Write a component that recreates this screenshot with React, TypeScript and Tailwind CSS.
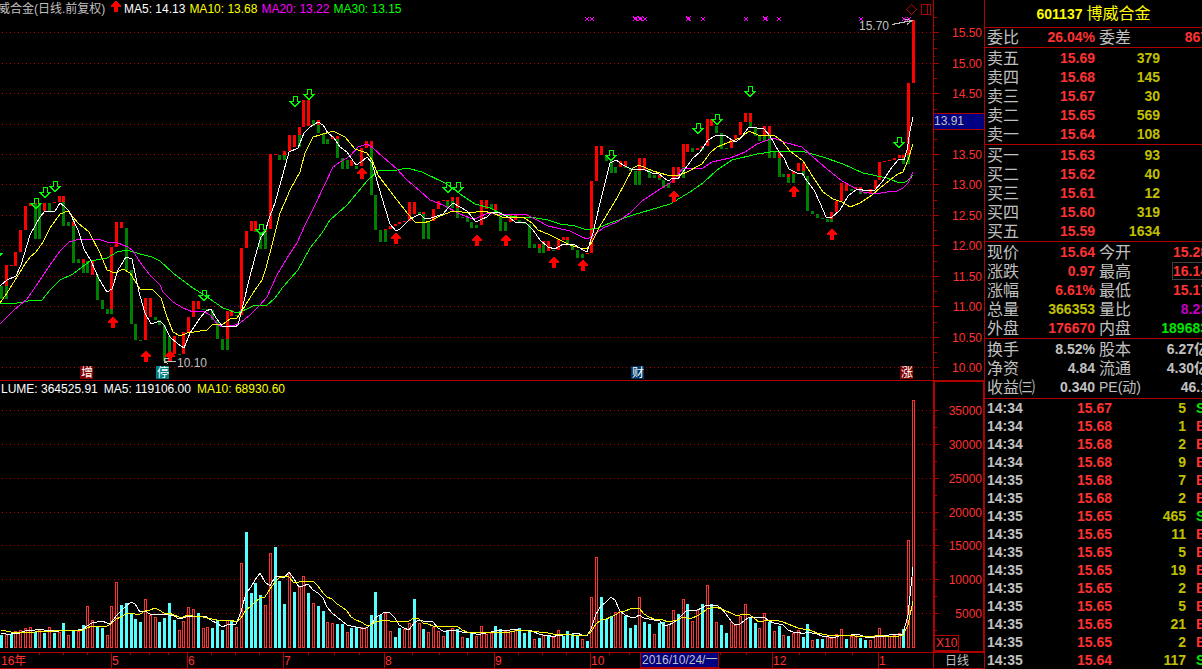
import React from "react";

const STEP = 4.8;
const VOLUME_BASE = 648;

// One entry per trading day: top, split, bottom. Red runs top to split, green runs split to bottom.
const PRICE_BARS: [number, number, number][] = [
  [286, 286, 299], [265, 286, 299], [265, 266, 266], [252, 266, 266], [230, 252, 252], [206, 230, 230],
  [203, 206, 206], [203, 204, 239], [203, 203, 239], [203, 211, 211], [203, 203, 211], [202, 203, 203],
  [196, 202, 202], [196, 202, 226], [222, 222, 226], [222, 226, 263], [259, 259, 263], [259, 263, 273],
  [261, 261, 273], [261, 275, 275], [275, 275, 300], [300, 300, 309], [309, 309, 314], [247, 309, 314],
  [222, 247, 247], [222, 228, 228], [228, 228, 270], [270, 270, 324], [324, 324, 340], [340, 340, 341],
  [298, 340, 340], [298, 317, 317], [317, 317, 320], [320, 320, 325], [325, 325, 361], [336, 336, 361],
  [336, 354, 354], [354, 354, 355], [332, 354, 354], [317, 332, 332], [301, 317, 317], [301, 309, 309],
  [309, 309, 310], [309, 309, 310], [310, 310, 320], [320, 320, 339], [339, 339, 350], [311, 339, 350],
  [310, 316, 316], [315, 315, 316], [248, 315, 315], [231, 248, 248], [221, 231, 231], [221, 231, 232],
  [232, 232, 249], [230, 232, 249], [154, 229, 229], [154, 155, 155], [155, 155, 160], [151, 155, 160],
  [135, 151, 151], [135, 147, 147], [127, 135, 147], [100, 127, 127], [100, 126, 126], [120, 120, 126],
  [120, 125, 133], [133, 133, 144], [139, 139, 144], [136, 139, 139], [136, 139, 158], [158, 158, 169],
  [160, 160, 169], [160, 166, 166], [166, 166, 169], [148, 166, 166], [141, 148, 148], [141, 148, 195],
  [195, 195, 230], [230, 230, 242], [229, 230, 242], [226, 229, 229], [224, 226, 226], [222, 224, 224],
  [221, 222, 222], [202, 221, 221], [202, 214, 214], [212, 212, 214], [212, 214, 239], [221, 221, 239],
  [209, 221, 221], [201, 209, 209], [200, 201, 201], [200, 201, 208], [197, 201, 208], [197, 208, 218],
  [217, 217, 218], [217, 217, 222], [222, 222, 228], [225, 225, 228], [200, 225, 225], [200, 209, 209],
  [204, 204, 209], [204, 210, 215], [212, 212, 231], [222, 222, 231], [215, 222, 222], [215, 220, 220],
  [220, 220, 222], [222, 222, 224], [224, 224, 248], [244, 244, 248], [244, 248, 253], [241, 244, 253],
  [241, 251, 251], [250, 250, 251], [239, 250, 250], [237, 240, 240], [237, 240, 245], [245, 245, 250],
  [250, 250, 258], [254, 254, 258], [253, 254, 254], [181, 253, 253], [146, 181, 181], [146, 155, 155],
  [155, 155, 161], [161, 161, 173], [167, 167, 173], [161, 167, 167], [161, 167, 168], [168, 168, 171],
  [171, 171, 185], [158, 171, 185], [158, 170, 170], [170, 170, 178], [175, 175, 178], [175, 178, 180],
  [180, 180, 188], [183, 183, 188], [167, 183, 183], [167, 177, 177], [144, 167, 178], [144, 152, 152],
  [148, 148, 152], [148, 150, 150], [146, 148, 150], [119, 146, 146], [119, 126, 126], [126, 126, 133],
  [133, 133, 149], [148, 148, 149], [139, 148, 148], [135, 139, 139], [122, 135, 135], [113, 122, 122],
  [113, 122, 128], [128, 128, 136], [136, 136, 141], [126, 136, 141], [126, 135, 158], [152, 152, 158],
  [152, 158, 177], [174, 174, 177], [174, 177, 183], [171, 174, 183], [163, 171, 171], [163, 171, 176],
  [176, 176, 211], [211, 211, 214], [214, 214, 218], [218, 218, 219], [219, 219, 222], [212, 219, 222],
  [201, 212, 212], [183, 201, 201], [183, 191, 191], [189, 189, 191], [187, 189, 189], [187, 189, 194],
  [193, 193, 194], [189, 193, 193], [180, 189, 189], [162, 180, 180], [161, 162, 162], [160, 161, 161],
  [158, 160, 160], [155, 158, 158], [155, 158, 164], [83, 155, 164], [20, 83, 83],
];

// Positive = up day (hollow red), negative = down day (solid cyan)
const VOLUMES = [
  -13, 14, -14, 17, 18, 20, 21, -16, 18, -15, 21, -15, 16, -25, 13, -17, 17, -23, 42, 28,
  -21, -20, 13, 42, 66, -43, -45, -35, -29, -26, 49, 33, 31, -26, -30, -45, -28, 18, 27, 41,
  39, -35, 20, 21, -20, -28, -18, 28, -27, 21, 85, -116, -55, -65, -53, 43, 95, -101, -67, -44,
  75, -56, 61, 72, -55, 45, -42, -37, 26, 25, -24, -24, 16, -20, -21, 21, 21, -33, -56, -33,
  35, 17, -11, -20, 19, 25, -49, 25, -19, 16, 21, 17, 12, -18, 20, -19, 11, -10, -16, 12,
  22, 14, 15, -22, -19, 17, 17, 18, -20, -15, -18, 9, -10, 13, -13, 11, 18, -12, -17, -14,
  -13, 9, -7, 51, 91, -51, -29, -32, 36, 37, -32, -20, -23, 51, -26, -24, 14, -25, -26, 24,
  38, -34, 49, -44, 27, 38, -44, 63, -44, 26, -23, -15, 26, 23, 32, 44, -31, -25, 20, 35,
  -26, 17, -22, 13, -12, 15, 18, -11, -24, 8, -9, -9, 12, 10, 14, 19, -9, 12, 14, -10,
  -8, 8, 13, 20, 12, 12, 13, 15, -19, 108, 248,
];

const EARLIER_VOLUMES = [22, 22, 22, 22, 22, 16, 15, 15, 15, 15];

const MA5 =
  "0,286 7,280 16,276 21,265 30,235 40,217 45,211 55,211 60,203 64,206 69,211 78,230 84,249 91,261 99,279 107,292 112,289 118,270 126,257 132,259 139,292 145,313 151,324 160,321 164,325 170,337 178,344 184,348 190,333 200,318 206,311 211,309 216,318 222,326 235,327 238,325 243,305 250,276 257,250 261,237 265,232 270,216 275,203 289,152 298,148 304,133 310,127 318,122 323,125 328,133 334,138 340,147 347,152 356,165 361,162 367,157 372,163 379,188 385,208 390,224 396,231 400,229 410,219 420,214 424,218 431,218 443,214 448,208 453,203 460,207 467,211 476,222 482,219 487,217 492,212 500,213 510,218 515,222 525,222 533,230 540,240 548,247 555,249 563,244 575,245 583,250 587,252 593,233 600,203 605,183 610,163 616,160 623,165 633,170 643,169 652,173 658,173 664,178 668,181 673,178 678,179 685,169 693,158 700,152 708,140 717,135 726,136 735,142 740,139 749,127 764,129 770,136 779,152 784,158 789,169 797,173 802,173 807,181 814,190 820,203 826,217 831,218 840,210 848,196 857,189 868,191 875,190 882,182 892,167 899,159 904,160 907,150 910,131 913,117";

const MA10 =
  "0,303 7,293 17,277 25,264 30,257 36,252 43,242 50,228 60,214 68,211 78,223 89,232 100,253 107,270 115,273 123,269 130,273 140,289 153,290 161,298 167,317 173,332 180,336 187,333 207,330 213,324 222,325 230,319 237,318 243,309 255,290 262,280 266,268 272,245 280,213 285,202 290,190 300,172 305,153 313,137 320,135 333,131 345,137 355,149 367,153 372,160 378,175 387,187 397,200 408,214 415,222 423,223 430,221 440,216 453,211 470,213 482,211 493,213 502,217 523,217 532,223 538,230 550,235 560,240 570,245 580,248 587,249 592,242 600,226 617,198 633,168 639,165 653,171 667,175 677,176 687,172 702,164 710,153 717,147 727,143 740,138 749,131 758,135 775,136 782,141 790,151 803,161 813,177 823,192 833,199 842,202 850,207 860,203 872,195 880,188 890,180 898,174 903,172 908,160 913,144";

const MA20 =
  "0,324 13,311 27,299 40,280 50,265 60,251 69,242 80,239 98,239 107,242 118,243 128,247 133,251 142,265 150,275 160,285 163,292 173,302 183,308 193,312 203,311 210,315 218,325 223,327 235,325 240,323 250,315 260,305 267,297 277,275 287,258 297,243 305,225 315,205 333,167 340,162 350,156 358,147 367,144 373,148 383,157 397,169 407,180 420,191 430,200 443,205 460,214 470,218 477,218 488,213 503,215 525,214 537,220 548,226 570,231 582,237 587,239 593,236 603,228 617,222 630,213 642,201 657,191 670,183 678,175 682,169 703,168 712,162 730,158 745,152 757,144 773,138 787,143 802,147 813,157 827,169 842,181 853,187 863,192 875,194 887,192 897,191 903,188 908,183 913,172";

const MA30 =
  "0,303 12,304 28,301 42,300 50,290 60,280 73,274 90,261 107,258 117,252 127,250 140,254 152,257 160,261 173,273 190,286 210,299 223,308 237,313 247,309 255,305 266,306 275,298 283,287 298,270 310,248 322,233 330,220 347,205 357,193 367,181 378,171 397,170 407,168 422,172 447,184 460,194 475,204 490,208 503,215 517,217 530,217 548,220 560,224 575,226 587,230 598,228 610,223 633,215 650,210 670,204 685,195 690,192 703,183 717,170 732,160 757,154 777,151 805,152 823,157 843,164 863,173 887,178 897,182 905,182 910,179 913,175";

const PRICE_TICKS = [
  { y: 32, label: "15.50" },
  { y: 63, label: "15.00" },
  { y: 93, label: "14.50" },
  { y: 124, label: "" },
  { y: 154, label: "13.50" },
  { y: 184, label: "13.00" },
  { y: 215, label: "12.50" },
  { y: 245, label: "12.00" },
  { y: 276, label: "11.50" },
  { y: 306, label: "11.00" },
  { y: 337, label: "10.50" },
  { y: 367, label: "10.00" },
];

const VOLUME_TICKS = [
  { y: 410, label: "35000" },
  { y: 444, label: "30000" },
  { y: 478, label: "25000" },
  { y: 512, label: "20000" },
  { y: 545, label: "15000" },
  { y: 579, label: "10000" },
  { y: 613, label: "5000" },
];

const BUY_ARROWS = [
  [113, 317], [146, 351], [170, 351], [362, 168], [396, 233], [477, 235],
  [506, 235], [554, 257], [583, 260], [674, 191], [794, 186], [832, 229],
];

const SELL_ARROWS = [
  [36, 198], [45, 187], [55, 181], [204, 290], [261, 224], [295, 96], [309, 89],
  [448, 182], [458, 182], [611, 150], [698, 123], [717, 114], [750, 86], [899, 137],
];

const EVENT_MARKS = [587, 592, 635, 640, 645, 688, 703, 746, 765, 779, 861, 904, 909];
const STRONG_MARKS = [635, 640, 688, 765];

const TAGS = [
  { x: 80, label: "增", fill: "#800000" },
  { x: 156, label: "停", fill: "#008080" },
  { x: 631, label: "财", fill: "#003366" },
  { x: 900, label: "涨", fill: "#800000" },
];

const MONTHS = [
  { x: 111, label: "5" },
  { x: 187, label: "6" },
  { x: 283, label: "7" },
  { x: 384, label: "8" },
  { x: 494, label: "9" },
  { x: 590, label: "10" },
  { x: 772, label: "12" },
  { x: 878, label: "1" },
];

const WEEK_TICKS = [
  39, 63, 87, 130, 149, 168, 211, 235, 259, 308, 334, 359, 412, 439, 467, 518, 542, 566, 609, 629, 720, 746, 799, 825, 852,
];

const ASKS = [
  ["卖五", "15.69", "379"],
  ["卖四", "15.68", "145"],
  ["卖三", "15.67", "30"],
  ["卖二", "15.65", "569"],
  ["卖一", "15.64", "108"],
];

const BIDS = [
  ["买一", "15.63", "93"],
  ["买二", "15.62", "40"],
  ["买三", "15.61", "12"],
  ["买四", "15.60", "319"],
  ["买五", "15.59", "1634"],
];

interface QuoteRow {
  left: string;
  leftValue: string;
  leftColor: string;
  right: string;
  rightValue: string;
  rightColor: string;
  boxed?: boolean;
  small?: boolean;
}

const RED = "text-[#ff3232]";
const GRAY = "text-[#c0c0c0]";

const RATIO: QuoteRow[] = [
  { left: "委比", leftValue: "26.04%", leftColor: RED, right: "委差", rightValue: "867", rightColor: RED },
];

const QUOTES: QuoteRow[] = [
  { left: "现价", leftValue: "15.64", leftColor: RED, right: "今开", rightValue: "15.28", rightColor: RED },
  { left: "涨跌", leftValue: "0.97", leftColor: RED, right: "最高", rightValue: "16.14", rightColor: RED, boxed: true },
  { left: "涨幅", leftValue: "6.61%", leftColor: RED, right: "最低", rightValue: "15.17", rightColor: RED },
  { left: "总量", leftValue: "366353", leftColor: "text-[#c0c000]", right: "量比", rightValue: "8.23", rightColor: "text-[#c000c0]" },
  { left: "外盘", leftValue: "176670", leftColor: RED, right: "内盘", rightValue: "189683", rightColor: "text-[#00e600]" },
];

const FUNDAMENTALS: QuoteRow[] = [
  { left: "换手", leftValue: "8.52%", leftColor: GRAY, right: "股本", rightValue: "6.27亿", rightColor: GRAY },
  { left: "净资", leftValue: "4.84", leftColor: GRAY, right: "流通", rightValue: "4.30亿", rightColor: GRAY },
  { left: "收益㈢", leftValue: "0.340", leftColor: GRAY, right: "PE(动)", rightValue: "46.1", rightColor: GRAY, small: true },
];

const TRADES = [
  ["14:34", "15.67", "5", "S"],
  ["14:34", "15.68", "1", "B"],
  ["14:34", "15.68", "2", "B"],
  ["14:34", "15.68", "9", "B"],
  ["14:35", "15.68", "7", "B"],
  ["14:35", "15.68", "2", "B"],
  ["14:35", "15.65", "465", "S"],
  ["14:35", "15.65", "11", "B"],
  ["14:35", "15.65", "5", "B"],
  ["14:35", "15.65", "19", "B"],
  ["14:35", "15.65", "2", "B"],
  ["14:35", "15.65", "5", "B"],
  ["14:35", "15.65", "21", "B"],
  ["14:35", "15.65", "2", "B"],
  ["14:35", "15.64", "117", "S"],
];

const barX = (index: number) => Math.round(index * STEP);

const volumeAverage = (days: number) => {
  const all = [...EARLIER_VOLUMES, ...VOLUMES].map(Math.abs);
  return VOLUMES.map((_, i) => {
    const end = i + EARLIER_VOLUMES.length + 1;
    const sum = all.slice(end - days, end).reduce((a, b) => a + b, 0);
    return `${barX(i) + 1},${Math.round(VOLUME_BASE - sum / days)}`;
  }).join(" ");
};

const GridLine: React.FC<{ y: number }> = ({ y }) => (
  <line x1={2} x2={932} y1={y + 0.5} y2={y + 0.5} stroke="#b00000" strokeDasharray="1 3" />
);

const AxisLabel: React.FC<{ y: number; label: string }> = ({ y, label }) => (
  <text x={982} y={y + 5} textAnchor="end" fontSize={12} fill="#ff3232">
    {label}
  </text>
);

const PriceChart: React.FC = () => (
  <svg viewBox="0 18 984 362" className="block w-full overflow-visible" role="img" aria-label="日线">
    <g shapeRendering="crispEdges">
      {PRICE_TICKS.map((tick) => (
        <GridLine key={tick.y} y={tick.y} />
      ))}

      <rect x={933} y={18} width={1} height={362} fill="#b00000" />
      {PRICE_TICKS.map((tick) => (
        <g key={tick.y} fill="#b00000">
          <rect x={934} y={tick.y} width={5} height={1} />
          <rect x={934} y={tick.y + 7} width={1} height={1} />
          <rect x={934} y={tick.y - 15} width={3} height={1} />
          <rect x={934} y={tick.y - 7} width={1} height={1} />
        </g>
      ))}

      {PRICE_BARS.map(([top, split, bottom], i) => (
        <g key={i}>
          {split > top && <rect x={barX(i)} y={top} width={3} height={split - top} fill="#ff0000" />}
          {bottom > split && <rect x={barX(i)} y={split} width={3} height={bottom - split} fill="#008000" />}
        </g>
      ))}

      <g fill="none" strokeWidth={1}>
        <polyline points={MA30} stroke="#00ff00" />
        <polyline points={MA20} stroke="#ff00ff" />
        <polyline points={MA10} stroke="#ffff00" />
        <polyline points={MA5} stroke="#ffffff" />
      </g>

      {BUY_ARROWS.map(([x, y]) => (
        <path key={x} d={`M${x - 1} ${y}h2v1h1v1h1v1h1v1h1v2h-3v5h-4v-5h-3v-2h1v-1h1v-1h1v-1h1z`} fill="#ff0000" />
      ))}
      {SELL_ARROWS.map(([x, y]) => (
        <path
          key={x}
          d={`M${x - 2} ${y + 0.5}h4v5h3l-5 5l-5 -5h3z`}
          fill="none"
          stroke="#00ff00"
        />
      ))}
      <path d="M0 253.5h2l-2 2" fill="none" stroke="#00ff00" />

      {EVENT_MARKS.map((x) => (
        <g key={x} fill="#ff00ff">
          <path d={`M${x - 2} 17h1v1h2v-1h1v1h-1v2h1v1h-1v-1h-2v1h-1v-1h1v-2h-1z`} />
          {STRONG_MARKS.includes(x) && <path d={`M${x - 2} 16h1v1h3v-1h1v1h-1v3h1v1h-1v-1h-3v1h-1v-1h1v-3h-1z`} />}
        </g>
      ))}

      <g fill="none" stroke="#c0c0c0">
        <path d="M892 24.5L912 20.5M905 19.5L912 20.5L907 24.5" />
        <path d="M176 361.5H164M169 358.5H164.5V363M164.5 361L168 364" />
      </g>

      <rect x={934} y={113} width={50} height={17} fill="#b00000" />
      <rect x={934} y={114} width={50} height={15} fill="#000080" />

      {TAGS.map((tag) => (
        <rect key={tag.label} x={tag.x} y={366} width={13} height={13} fill={tag.fill} />
      ))}
    </g>

    {PRICE_TICKS.map((tick) => (
      <AxisLabel key={tick.y} y={tick.y} label={tick.label} />
    ))}
    <g fontSize={12} fill="#c0c0c0">
      <text x={859} y={30}>15.70</text>
      <text x={177} y={367}>10.10</text>
      <text x={934} y={125}>13.91</text>
    </g>
    {TAGS.map((tag) => (
      <text key={tag.label} x={tag.x + 1} y={377} fontSize={12} fill="#ffffff">
        {tag.label}
      </text>
    ))}
  </svg>
);

const VolumeChart: React.FC = () => (
  <svg viewBox="0 397 984 255" className="block w-full" role="img" aria-label="VOLUME">
    <g shapeRendering="crispEdges">
      {VOLUME_TICKS.map((tick) => (
        <g key={tick.y}>
          <GridLine y={tick.y} />
          <rect x={935} y={tick.y} width={4} height={1} fill="#b00000" />
          <rect x={935} y={tick.y + 17} width={2} height={1} fill="#b00000" />
        </g>
      ))}
      <rect x={933} y={397} width={2} height={255} fill="#b00000" />
      <rect x={983} y={397} width={1} height={255} fill="#b00000" />

      {VOLUMES.map((volume, i) =>
        volume > 0 ? (
          <rect
            key={i}
            x={barX(i) + 0.5}
            y={VOLUME_BASE - volume + 0.5}
            width={2}
            height={volume - 1}
            fill="none"
            stroke="#ff3232"
          />
        ) : (
          <rect key={i} x={barX(i)} y={VOLUME_BASE + volume} width={3} height={-volume} fill="#54ffff" />
        )
      )}

      <polyline points={volumeAverage(5)} fill="none" stroke="#ffffff" />
      <polyline points={volumeAverage(10)} fill="none" stroke="#ffff00" />

      <rect x={934.5} y={635.5} width={24} height={15} fill="#000000" stroke="#b00000" />
      <rect x={933} y={651} width={51} height={1} fill="#b00000" />
    </g>

    {VOLUME_TICKS.map((tick) => (
      <AxisLabel key={tick.y} y={tick.y} label={tick.label} />
    ))}
    <text x={936} y={647} fontSize={12} fill="#ff3232">
      X10
    </text>
  </svg>
);

const DateAxis: React.FC = () => (
  <svg viewBox="0 652 984 17" className="block w-full" role="img" aria-label="2016年">
    <g shapeRendering="crispEdges" fill="#b00000">
      <rect x={0} y={652} width={984} height={1} />
      <rect x={0} y={668} width={984} height={1} />
      <rect x={933} y={652} width={1} height={17} />
      {WEEK_TICKS.map((x) => (
        <rect key={x} x={x} y={653} width={1} height={2} />
      ))}
      {MONTHS.map((month) => (
        <rect key={month.label} x={month.x} y={652} width={1} height={16} />
      ))}
      <rect x={640} y={652} width={79} height={16} />
      <rect x={641} y={653} width={77} height={14} fill="#000080" />
    </g>
    <g fontSize={12} fill="#ff3232">
      <text x={1} y={665}>16年</text>
      {MONTHS.map((month) => (
        <text key={month.label} x={month.x + 1} y={665}>
          {month.label}
        </text>
      ))}
    </g>
    <g fontSize={12} fill="#c0c0c0">
      <text x={642} y={664}>2016/10/24/一</text>
      <text x={945} y={665}>日线</text>
    </g>
  </svg>
);

const BookTable: React.FC<{ rows: string[][] }> = ({ rows }) => (
  <table className="w-[173px] table-fixed border-collapse">
    <tbody>
      {rows.map(([label, price, size]) => (
        <tr key={label} className="h-[19px]">
          <th className={`w-8 p-0 text-left text-base leading-[19px] font-normal ${GRAY}`}>{label}</th>
          <td className="w-[76px] p-0 text-right leading-[19px] font-bold text-[#ff3232]">{price}</td>
          <td className="p-0 text-right leading-[19px] font-bold text-[#c0c000]">{size}</td>
        </tr>
      ))}
    </tbody>
  </table>
);

const QuoteTable: React.FC<{ rows: QuoteRow[] }> = ({ rows }) => (
  <table className="w-[221px] table-fixed border-collapse whitespace-nowrap">
    <tbody>
      {rows.map((row) => (
        <tr key={row.left} className="h-[19px]">
          <th className={`w-8 p-0 text-left text-base leading-[19px] font-normal ${GRAY}`}>{row.left}</th>
          <td className={`w-[76px] p-0 text-right leading-[19px] font-bold ${row.leftColor}`}>{row.leftValue}</td>
          <th className={`w-9 p-0 pl-1 text-left ${row.small ? "text-sm" : "text-base"} leading-[19px] font-normal ${GRAY}`}>
            {row.right}
          </th>
          <td className={`p-0 text-right leading-[19px] font-bold ${row.rightColor}`}>
            <span className={row.boxed ? "outline outline-[#404040]" : ""}>{row.rightValue}</span>
          </td>
        </tr>
      ))}
    </tbody>
  </table>
);

const TradeTable: React.FC = () => (
  <table className="w-[221px] table-fixed border-collapse">
    <tbody>
      {TRADES.map(([time, price, size, side], i) => (
        <tr key={i} className="h-[18px]">
          <td className={`w-9 p-0 leading-[18px] font-bold ${GRAY}`}>{time}</td>
          <td className="w-[89px] p-0 text-right leading-[18px] font-bold text-[#ff3232]">{price}</td>
          <td className="w-[74px] p-0 text-right leading-[18px] font-bold text-[#c0c000]">{size}</td>
          <td className={`p-0 pl-[10px] leading-[18px] font-bold ${side === "S" ? "text-[#00e600]" : "text-[#ff3232]"}`}>
            {side}
          </td>
        </tr>
      ))}
    </tbody>
  </table>
);

const App: React.FC = () => {
  return (
    <div className="flex h-screen overflow-hidden bg-black font-['Liberation_Sans','Noto_Sans_CJK_SC',sans-serif]">
      <main className="min-w-0 flex-1">
        <section>
          <header className="flex h-[18px] text-xs leading-[18px] whitespace-nowrap">
            <div className="flex flex-1 gap-1 overflow-hidden border-r border-[#b00000]">
              <h1 className="-ml-[2px] w-[109px] text-[#c0c0c0]">威合金(日线.前复权)</h1>
              <svg viewBox="0 0 10 11" className="mt-px -mr-px h-[11px] w-[10px] shrink-0" shapeRendering="crispEdges">
                <path d="M4 0h2v1h1v1h1v1h1v1h1v2h-3v5h-4v-5h-3v-2h1v-1h1v-1h1v-1h1z" fill="#ff0000" />
              </svg>
              <span className="text-white">MA5: 14.13</span>
              <span className="text-[#ffff00]">MA10: 13.68</span>
              <span className="text-[#ff00ff]">MA20: 13.22</span>
              <span className="text-[#00ff00]">MA30: 13.15</span>
              <svg viewBox="0 0 26 12" className="mt-1 mr-px ml-auto h-3 w-[26px]" shapeRendering="crispEdges">
                <path d="M5.5 0.5l5 5l-5 5l-5 -5z" fill="none" stroke="#b00000" />
                <path d="M15.5 0.5h9v10h-9zM21.5 0.5v10" fill="none" stroke="#b00000" />
              </svg>
            </div>
            <div className="w-[50px]" />
          </header>
          <PriceChart />
        </section>

        <section className="border-t border-[#b00000]">
          <header className="flex h-4 text-xs leading-4 whitespace-nowrap">
            <div className="flex flex-1 gap-[6px] pl-px">
              <span className="text-white">LUME: 364525.91</span>
              <span className="text-white">MA5: 119106.00</span>
              <span className="text-[#ffff00]">MA10: 68930.60</span>
            </div>
            <div className="w-[51px] border-t border-r border-l-2 border-[#b00000]" />
          </header>
          <VolumeChart />
          <DateAxis />
        </section>
      </main>

      <aside className="w-[218px] shrink-0 overflow-hidden border-l border-[#b00000] text-sm">
        <h2 className="flex h-[27px] items-center justify-center gap-1 text-[#ffff00]">
          <span className="font-bold">601137</span>
          <span className="text-base">博威合金</span>
        </h2>
        <div className="h-5 border-t border-[#b00000] pl-[2px]">
          <QuoteTable rows={RATIO} />
        </div>
        <div className="h-[97px] border-t border-[#b00000] pt-px pl-[2px]">
          <BookTable rows={ASKS} />
        </div>
        <div className="h-[97px] border-t border-[#b00000] pt-px pl-[2px]">
          <BookTable rows={BIDS} />
        </div>
        <div className="h-[97px] border-t border-[#b00000] pt-px pl-[2px]">
          <QuoteTable rows={QUOTES} />
        </div>
        <div className="h-[60px] border-t border-[#b00000] pt-px pl-[2px]">
          <QuoteTable rows={FUNDAMENTALS} />
        </div>
        <div className="border-t border-[#b00000] pl-[2px]">
          <TradeTable />
        </div>
      </aside>
    </div>
  );
};

export default App;
